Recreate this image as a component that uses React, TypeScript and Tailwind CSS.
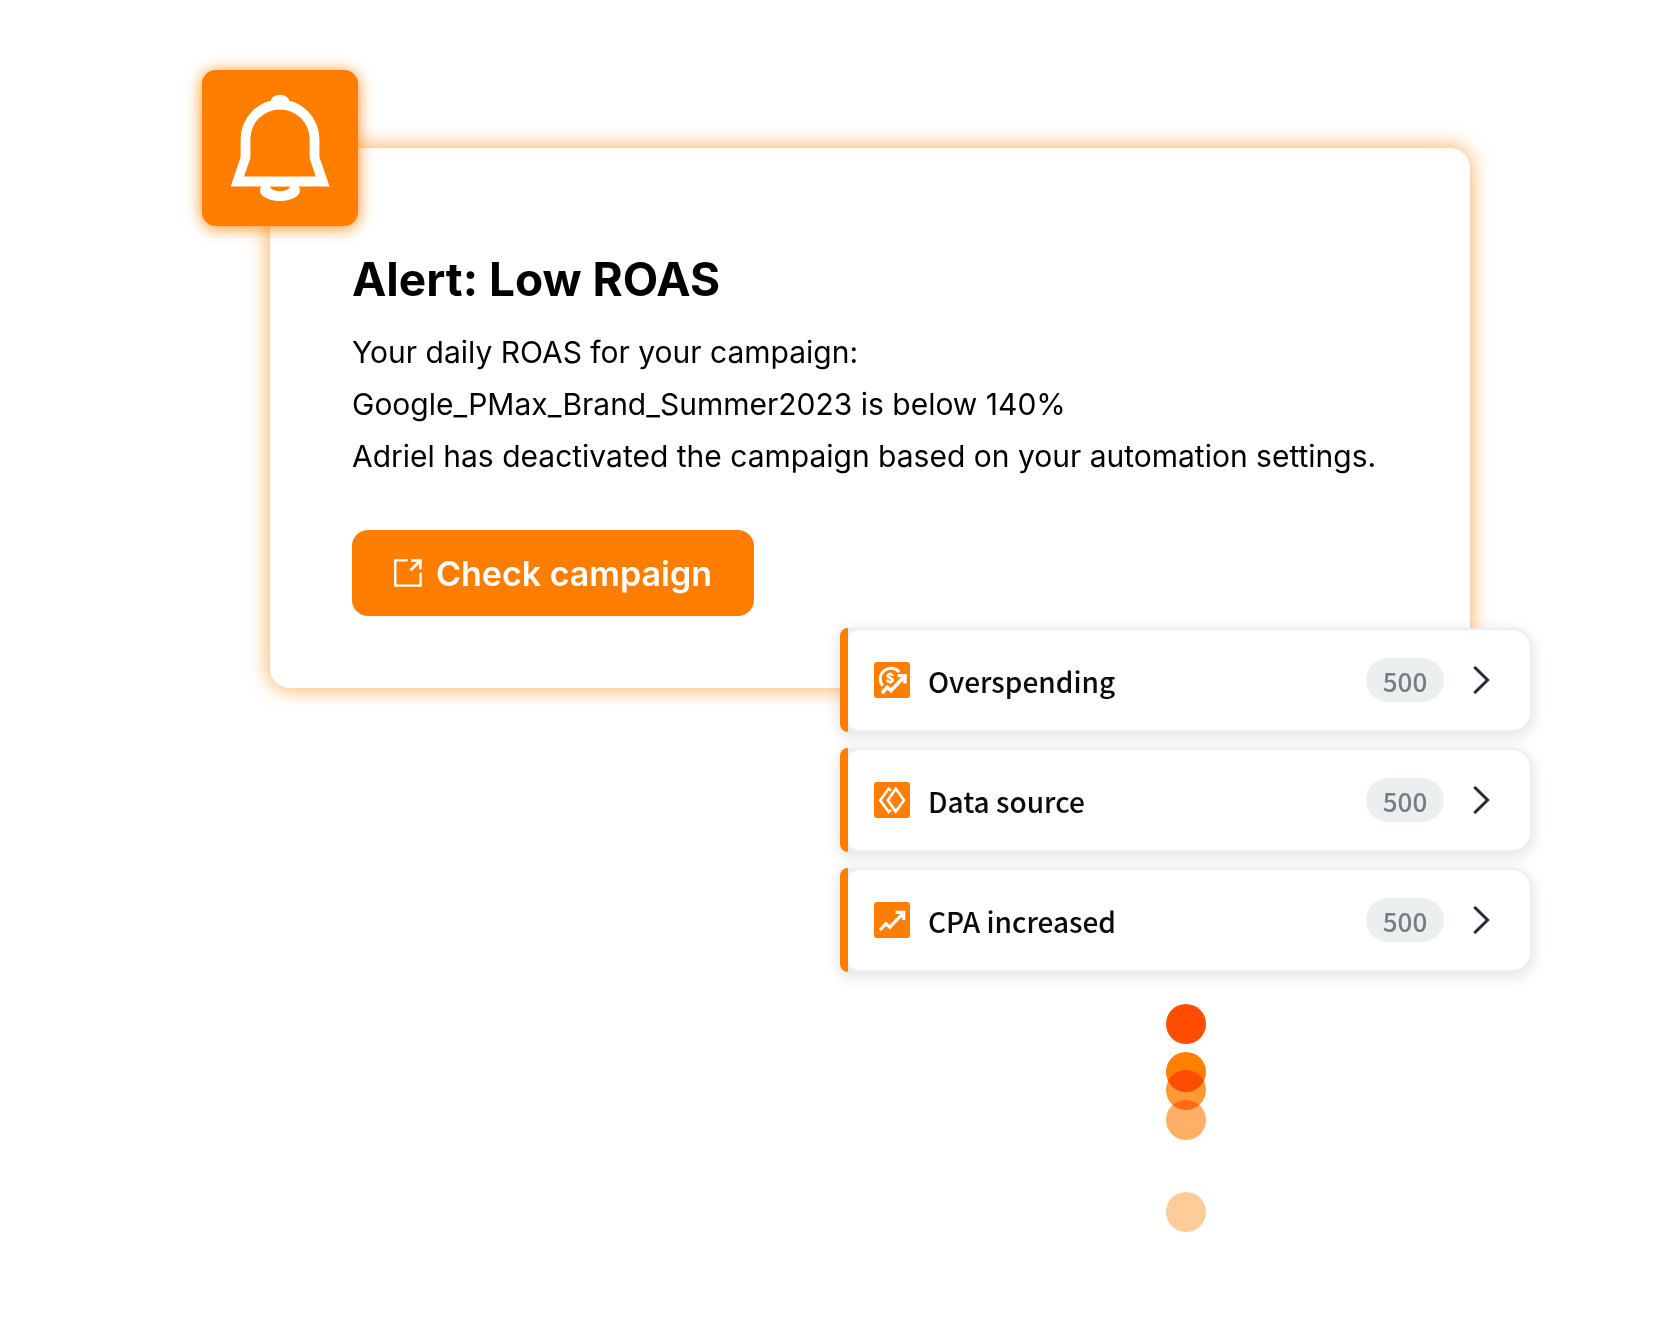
import React from 'react';

type AlertItemType = {
  label: string;
  count: number;
  icon: React.ReactNode;
};

const BellIcon = () => (
  <svg className="size-full" viewBox="0 0 156 156" fill="#fff" aria-hidden="true">
    <ellipse cx="78" cy="32" rx="9.5" ry="7.3" />
    <path
      fillRule="evenodd"
      d="M28.7 116.5 L38.6 87 V69 A39.4 39.4 0 0 1 117.4 69 V87 L127.6 116.5 Z M42 106.6 H113.8 L107.6 88 V69 A29.6 29.6 0 0 0 48.4 69 V88 Z"
    />
    <path
      fillRule="evenodd"
      d="M59.8 116 A20 10.6 0 1 0 96.2 116 Z M68 116.3 A10 5 0 0 0 88 116.3 Z"
    />
  </svg>
);

const ExternalIcon = () => (
  <svg className="size-7" viewBox="0 0 28 28" fill="none" stroke="#fff" aria-hidden="true">
    <path d="M13.7 1.4 H1.3 V26.6 H26.6 V13.7" strokeWidth="2.4" />
    <path d="M17.3 1.6 H26.3 V10.3" strokeWidth="2.8" />
    <path d="M16.5 11.3 L26 1.9" strokeWidth="2.8" />
  </svg>
);

const OverspendingIcon = () => (
  <svg className="size-9" viewBox="0 0 36 36" fill="none" stroke="#fff" aria-hidden="true">
    <path d="M25.3 10 A10.2 10.2 0 1 0 8.8 23.8" strokeWidth="3" />
    <text x="16" y="21" textAnchor="middle" fontSize="13" fontWeight="800" fill="#fff" stroke="none" className="font-[Inter,sans-serif]">$</text>
    <path d="M8 31 L13.3 25.3 L17 28.6 L30.5 14.5" strokeWidth="3.6" />
    <path d="M23.6 13.6 H31 V21.4" strokeWidth="3.4" />
  </svg>
);

const DataSourceIcon = () => (
  <svg className="size-9" viewBox="0 0 36 36" fill="none" stroke="#fff" strokeWidth="2.6" aria-hidden="true">
    <path d="M21.8 6.8 L30 18.2 L21.8 29.6 L13.8 18.2 Z" />
    <path d="M17 8.6 L14.8 6.6 L6.2 18.2 L14.8 29.8 L17 27.8" />
  </svg>
);

const IncreaseIcon = () => (
  <svg className="size-9" viewBox="0 0 36 36" fill="none" stroke="#fff" aria-hidden="true">
    <path d="M6 28 L12 21.8 L15.8 25.2 L29.5 10.8" strokeWidth="3.2" />
    <path d="M21.6 10.4 H29.6 V18" strokeWidth="3.4" />
  </svg>
);

const items: AlertItemType[] = [
  { label: 'Overspending', count: 500, icon: <OverspendingIcon /> },
  { label: 'Data source', count: 500, icon: <DataSourceIcon /> },
  { label: 'CPA increased', count: 500, icon: <IncreaseIcon /> },
];

const AlertItem = ({ item }: { item: AlertItemType }) => (
  <li className="flex rounded-l-[8px] rounded-r-[20px] bg-[#eeeeee] shadow-[0_4px_14px_2px_rgba(0,0,0,0.1)]">
    <span className="w-2 rounded-l-[8px] bg-[#ff7e00]"></span>
    <button className="flex h-[104px] grow items-center rounded-l-[12px] rounded-r-[20px] border-y-2 border-r-2 border-[#eeeeee] bg-white pr-10 pl-[26px] text-left">
      <span className="size-9 overflow-hidden rounded-[3px] bg-[#ff7e00]">{item.icon}</span>
      <span className="ml-[18px] grow pt-0.5 text-[28px] leading-10 font-medium text-[#0b0b0c]">{item.label}</span>
      <span className="flex h-11 w-[78px] justify-center rounded-full bg-[#eceff0] pt-[3px] text-[26px] leading-10 font-medium text-[#777d81]">{item.count}</span>
      <svg className="ml-[29px] h-7 w-[17px]" viewBox="0 0 17 28" fill="none" stroke="#2b2e38" strokeWidth="3.1" aria-hidden="true">
        <path d="M1.3 1 L14.6 14 L1.3 27" />
      </svg>
    </button>
  </li>
);

const App = () => {
  return (
    <main className="min-h-screen bg-white px-10 pt-[148px] pb-[100px] font-[Inter,sans-serif] text-black">
      <div className="mx-auto max-w-[1260px]">
        <section className="relative ml-[60px] rounded-[20px] bg-white px-[82px] pt-[102px] pb-[72px] shadow-[0_0_20px_2px_rgba(255,128,0,0.6)]">
          <div className="absolute -top-[78px] -left-[68px] size-[156px] rounded-[14px] bg-[#ff7e00] shadow-[0_2px_16px_rgba(255,128,0,0.9)]">
            <BellIcon />
          </div>
          <h1 className="text-[46px] leading-[58px] font-bold">Alert: Low ROAS</h1>
          <p className="mt-[18px] text-[30px] leading-[52px]">
            Your daily ROAS for your campaign:
            <br />
            Google_PMax_Brand_Summer2023 is below 140%
            <br />
            Adriel has deactivated the campaign based on your automation settings.
          </p>
          <button className="mt-12 flex h-[86px] items-center gap-[14px] rounded-[16px] bg-[#ff7e00] px-[42px] text-[34px] font-semibold text-white">
            <ExternalIcon />
            Check campaign
          </button>
        </section>

        <div className="relative -mt-[60px] -mr-[62px] ml-auto w-[692px]">
          <ul className="flex flex-col gap-4 font-['Noto_Sans_CJK_KR',sans-serif]">
            {items.map((item) => (
              <AlertItem item={item} key={item.label} />
            ))}
          </ul>
          <div className="mt-8 ml-[326px] flex flex-col">
            <span className="size-10 rounded-full bg-[#ff4d00]"></span>
            <span className="mt-2 size-10 rounded-full bg-[#ff8000] mix-blend-multiply"></span>
            <span className="-mt-[22px] size-10 rounded-full bg-[#ff9933] mix-blend-multiply"></span>
            <span className="-mt-[10px] size-10 rounded-full bg-[#ffb066] mix-blend-multiply"></span>
            <span className="mt-[52px] size-10 rounded-full bg-[#ffcc99]"></span>
          </div>
        </div>
      </div>
    </main>
  );
};

export default App;
